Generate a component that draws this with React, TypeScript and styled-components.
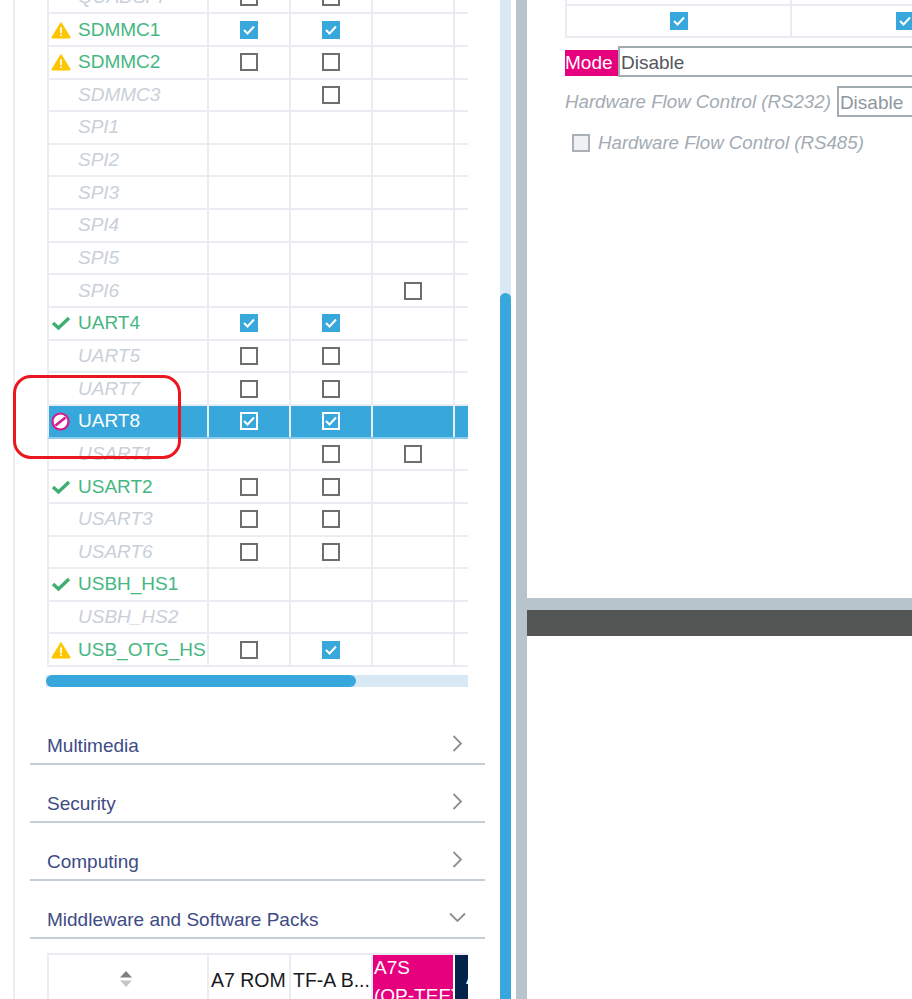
import styled, { createGlobalStyle } from "styled-components";

const GlobalStyle = createGlobalStyle`
  html, body {
    margin: 0;
    padding: 0;
    background: #fff;
    font-family: "Liberation Sans", Arial, sans-serif;
  }
`;

const StyledPage = styled.div`
  position: relative;
  display: flex;
  width: 912px;
  height: 999px;
  overflow: hidden;
  background: #fff;
`;

const StyledSidebar = styled.div`
  flex: 0 0 487px;
  box-sizing: border-box;
  margin-left: 13px;
  padding-left: 15px;
  border-left: 2px solid #eceef3;
  overflow: hidden;
`;

const StyledTableClip = styled.div`
  margin: -18.4px 0 0 17px;
  width: 421px;
  overflow: hidden;
`;

const StyledRow = styled.div<{ $selected?: boolean }>`
  display: grid;
  grid-template-columns: 160px 82px 82px 82px 82px;
  height: 32.65px;
  box-sizing: border-box;
  border-bottom: 2px solid ${({ $selected }) => ($selected ? "#8ccbe9" : "#e9ecf1")};
  border-left: 2px solid #e9ecf1;
  background: ${({ $selected }) => ($selected ? "#38a8dc" : "transparent")};
`;

const StyledNameCell = styled.div`
  display: flex;
  align-items: center;
  padding-left: 2px;
  border-right: 2px solid #e9ecf1;
  overflow: hidden;
`;

const StyledCell = styled.div`
  display: flex;
  align-items: center;
  justify-content: center;
  border-right: 2px solid #e9ecf1;
`;

const StyledIconSlot = styled.span`
  flex: 0 0 27px;
  display: flex;
  align-items: center;
`;

const StyledName = styled.span<{ $status: RowStatus }>`
  font-size: 19px;
  white-space: nowrap;
  font-style: ${({ $status }) => ($status === "off" ? "italic" : "normal")};
  color: ${({ $status }) =>
    $status === "off" ? "#c9d0d8" : $status === "blocked" ? "#fff" : "#45b781"};
`;

const StyledBox = styled.span<{ $checked?: boolean; $selected?: boolean; $disabled?: boolean }>`
  display: inline-flex;
  align-items: center;
  justify-content: center;
  box-sizing: border-box;
  width: 18px;
  height: 18px;
  border: ${({ $checked, $selected, $disabled }) =>
    $selected
      ? "2px solid #fff"
      : $disabled
        ? "2px solid #a9b0b6"
        : $checked
          ? "0"
          : "2px solid #6e6e6e"};
  background: ${({ $checked, $selected, $disabled }) =>
    $selected ? "transparent" : $disabled ? "#eff1f4" : $checked ? "#38a8dc" : "#fff"};
`;

const StyledHScroll = styled.div`
  margin: 8.4px 0 0 16px;
  width: 422px;
  height: 12px;
  background: #d9e8f5;
`;

const StyledHThumb = styled.div`
  width: 310px;
  height: 100%;
  border-radius: 6px;
  background: #38a8dc;
`;

const StyledAccordions = styled.div`
  margin-top: 20px;
  width: 455px;
`;

const StyledAccordion = styled.div`
  display: flex;
  align-items: flex-end;
  justify-content: space-between;
  box-sizing: border-box;
  height: 57.8px;
  padding: 0 22px 6px 17px;
  border-bottom: 2px solid #c5ced6;
  font-size: 19px;
  color: #3e4b85;
`;

const StyledChevron = styled.svg<{ $open?: boolean }>`
  display: block;
  margin-bottom: ${({ $open }) => ($open ? "8px" : "5px")};
  margin-right: ${({ $open }) => ($open ? "-3px" : "0")};
`;

const StyledBottomTable = styled.div`
  margin: 14px 0 0 17px;
  width: 421px;
  height: 60px;
  display: grid;
  grid-template-columns: 160px 82px 82px 82px 13px;
  box-sizing: border-box;
  border-top: 2px solid #e9ecf1;
  border-left: 2px solid #e9ecf1;
  overflow: hidden;
`;

const StyledHeadCell = styled.div`
  display: flex;
  align-items: center;
  padding: 0 0 6px 2px;
  border-right: 2px solid #e9ecf1;
  font-size: 19.5px;
  color: #1a1a22;
  white-space: nowrap;
  overflow: hidden;
`;

const StyledSortCell = styled(StyledHeadCell)`
  justify-content: center;
  padding: 0 4px 10px 0;
`;

const StyledPinkHead = styled.div`
  margin-top: -1px;
  padding: 0 0 0 1px;
  background: #e6007e;
  color: #fff;
  font-size: 19px;
  line-height: 28px;
  white-space: nowrap;
  overflow: hidden;
  border-right: 2px solid #fff;
`;

const StyledNavyHead = styled.div`
  margin-top: -1px;
  padding: 14px 0 0 11px;
  background: #03234b;
  color: #fff;
  font-size: 18px;
  overflow: hidden;
`;

const StyledVScroll = styled.div`
  flex: 0 0 11px;
  display: flex;
  flex-direction: column;
  background: #d9e8f5;
`;

const StyledVThumb = styled.div`
  flex: 1;
  margin-top: 293px;
  border-radius: 6px 6px 0 0;
  background: #38a8dc;
`;

const StyledDivider = styled.div`
  flex: 0 0 11px;
  margin-left: 5px;
  background: #b8c4cb;
`;

const StyledRight = styled.div`
  flex: 1;
  display: flex;
  flex-direction: column;
  min-width: 0;
`;

const StyledConfig = styled.div`
  height: 598px;
  box-sizing: border-box;
  padding-left: 38px;
  overflow: hidden;
`;

const StyledConfigTable = styled.div`
  width: 460px;
  display: grid;
  grid-template-columns: 225px 227px;
  border-left: 2px solid #e9ecf1;
`;

const StyledConfigTop = styled.div`
  height: 4px;
  border-right: 2px solid #e9ecf1;
  border-bottom: 2px solid #e9ecf1;
`;

const StyledConfigCell = styled.div`
  height: 32px;
  box-sizing: border-box;
  display: flex;
  align-items: center;
  justify-content: center;
  border-right: 2px solid #e9ecf1;
  border-bottom: 2px solid #e9ecf1;
`;

const StyledModeRow = styled.div`
  display: flex;
  align-items: center;
  margin-top: 8px;
  width: 500px;
`;

const StyledModeLabel = styled.span`
  display: flex;
  align-items: center;
  box-sizing: border-box;
  width: 53px;
  height: 26px;
  margin-top: 2px;
  background: #e6007e;
  color: #fff;
  font-size: 19px;
`;

const StyledSelect = styled.div<{ $disabled?: boolean }>`
  display: flex;
  align-items: center;
  box-sizing: border-box;
  height: 31px;
  padding: 2px 0 0 1px;
  border: 2px solid #a2abb0;
  font-size: 19px;
  color: ${({ $disabled }) => ($disabled ? "#8f979e" : "#54565c")};
`;

const StyledModeSelect = styled(StyledSelect)`
  flex: 1;
`;

const StyledFlowRow = styled.div`
  display: flex;
  align-items: center;
  margin-top: 9px;
  width: 500px;
`;

const StyledFlowLabel = styled.span`
  font-size: 18.7px;
  font-style: italic;
  white-space: nowrap;
  color: #a3abb3;
  margin-right: 6px;
`;

const StyledFlowSelect = styled(StyledSelect)`
  flex: 1;
`;

const StyledRs485 = styled.div`
  display: flex;
  align-items: center;
  gap: 8px;
  margin: 15px 0 0 7px;
`;

const StyledDarkBar = styled.div`
  height: 26px;
  border-top: 12px solid #b8c4cb;
  background: #545655;
`;

const StyledAnnotation = styled.div`
  position: absolute;
  left: 13px;
  top: 375px;
  width: 168px;
  height: 84px;
  box-sizing: border-box;
  border: 3px solid #ea1620;
  border-radius: 18px;
  pointer-events: none;
`;

type RowStatus = "ok" | "warn" | "off" | "blocked";
type Tick = boolean | null;

interface IRow {
  name: string;
  status: RowStatus;
  ticks: Tick[];
}

const rows: IRow[] = [
  { name: "QUADSPI", status: "off", ticks: [false, false, null] },
  { name: "SDMMC1", status: "warn", ticks: [true, true, null] },
  { name: "SDMMC2", status: "warn", ticks: [false, false, null] },
  { name: "SDMMC3", status: "off", ticks: [null, false, null] },
  { name: "SPI1", status: "off", ticks: [null, null, null] },
  { name: "SPI2", status: "off", ticks: [null, null, null] },
  { name: "SPI3", status: "off", ticks: [null, null, null] },
  { name: "SPI4", status: "off", ticks: [null, null, null] },
  { name: "SPI5", status: "off", ticks: [null, null, null] },
  { name: "SPI6", status: "off", ticks: [null, null, false] },
  { name: "UART4", status: "ok", ticks: [true, true, null] },
  { name: "UART5", status: "off", ticks: [false, false, null] },
  { name: "UART7", status: "off", ticks: [false, false, null] },
  { name: "UART8", status: "blocked", ticks: [true, true, null] },
  { name: "USART1", status: "off", ticks: [null, false, false] },
  { name: "USART2", status: "ok", ticks: [false, false, null] },
  { name: "USART3", status: "off", ticks: [false, false, null] },
  { name: "USART6", status: "off", ticks: [false, false, null] },
  { name: "USBH_HS1", status: "ok", ticks: [null, null, null] },
  { name: "USBH_HS2", status: "off", ticks: [null, null, null] },
  { name: "USB_OTG_HS", status: "warn", ticks: [false, true, null] },
];

const StatusIcon = ({ status }: { status: RowStatus }) => {
  if (status === "warn") {
    return (
      <svg width="20" height="18" viewBox="0 0 21 18">
        <path d="M10.5 1 L20 16.5 Q20.3 17.5 19 17.5 H2 Q0.7 17.5 1 16.5 Z" fill="#fdc600" stroke="#fdc600" strokeLinejoin="round" />
        <rect x="9.6" y="6" width="1.8" height="6.5" fill="#fff" />
        <rect x="9.6" y="13.6" width="1.8" height="1.8" fill="#fff" />
      </svg>
    );
  }
  if (status === "ok") {
    return (
      <svg width="20" height="16" viewBox="0 0 20 16">
        <path d="M2 8 L7.5 13 L18 3" fill="none" stroke="#3fae72" strokeWidth="3.4" />
      </svg>
    );
  }
  if (status === "blocked") {
    return (
      <svg width="19" height="19" viewBox="0 0 19 19">
        <circle cx="9.5" cy="9.5" r="8" fill="#fff" stroke="#d6188f" strokeWidth="2.2" />
        <path d="M4.5 13.5 L14.5 5.5" stroke="#d6188f" strokeWidth="2.6" />
      </svg>
    );
  }
  return null;
};

const CheckMark = () => (
  <svg width="12" height="10" viewBox="0 0 12 10">
    <path d="M1 5 L4.5 8.5 L11 1.5" fill="none" stroke="#fff" strokeWidth="2" />
  </svg>
);

const Chevron = ({ open }: { open?: boolean }) =>
  open ? (
    <StyledChevron $open width="17" height="11" viewBox="0 0 17 11">
      <path d="M1 1.5 L8.5 9 L16 1.5" fill="none" stroke="#8b8f94" strokeWidth="1.8" />
    </StyledChevron>
  ) : (
    <StyledChevron width="11" height="17" viewBox="0 0 11 17">
      <path d="M1.5 1 L9 8.5 L1.5 16" fill="none" stroke="#8b8f94" strokeWidth="1.8" />
    </StyledChevron>
  );

const SortIcon = () => (
  <svg width="14" height="16" viewBox="0 0 14 16">
    <path d="M7 0 L13 6.5 H1 Z" fill="#7d8184" />
    <path d="M7 16 L13 9.5 H1 Z" fill="#c4c7c9" />
  </svg>
);

export default function App() {
  return (
    <StyledPage>
      <GlobalStyle />
      <StyledSidebar>
        <StyledTableClip>
          {rows.map((row) => (
            <StyledRow key={row.name} $selected={row.status === "blocked"}>
              <StyledNameCell>
                <StyledIconSlot>
                  <StatusIcon status={row.status} />
                </StyledIconSlot>
                <StyledName $status={row.status}>{row.name}</StyledName>
              </StyledNameCell>
              {row.ticks.map((tick, i) => (
                <StyledCell key={i}>
                  {tick !== null && (
                    <StyledBox $checked={tick} $selected={row.status === "blocked"}>
                      {tick && <CheckMark />}
                    </StyledBox>
                  )}
                </StyledCell>
              ))}
              <StyledCell />
            </StyledRow>
          ))}
        </StyledTableClip>
        <StyledHScroll>
          <StyledHThumb />
        </StyledHScroll>
        <StyledAccordions>
          <StyledAccordion>
            Multimedia
            <Chevron />
          </StyledAccordion>
          <StyledAccordion>
            Security
            <Chevron />
          </StyledAccordion>
          <StyledAccordion>
            Computing
            <Chevron />
          </StyledAccordion>
          <StyledAccordion>
            Middleware and Software Packs
            <Chevron open />
          </StyledAccordion>
        </StyledAccordions>
        <StyledBottomTable>
          <StyledSortCell>
            <SortIcon />
          </StyledSortCell>
          <StyledHeadCell>A7 ROM</StyledHeadCell>
          <StyledHeadCell>TF-A B...</StyledHeadCell>
          <StyledPinkHead>
            A7S
            <br />
            (OP-TEE)
          </StyledPinkHead>
          <StyledNavyHead>A</StyledNavyHead>
        </StyledBottomTable>
      </StyledSidebar>
      <StyledVScroll>
        <StyledVThumb />
      </StyledVScroll>
      <StyledDivider />
      <StyledRight>
        <StyledConfig>
          <StyledConfigTable>
            <StyledConfigTop />
            <StyledConfigTop />
            <StyledConfigCell>
              <StyledBox $checked>
                <CheckMark />
              </StyledBox>
            </StyledConfigCell>
            <StyledConfigCell>
              <StyledBox $checked>
                <CheckMark />
              </StyledBox>
            </StyledConfigCell>
          </StyledConfigTable>
          <StyledModeRow>
            <StyledModeLabel>Mode</StyledModeLabel>
            <StyledModeSelect>Disable</StyledModeSelect>
          </StyledModeRow>
          <StyledFlowRow>
            <StyledFlowLabel>Hardware Flow Control (RS232)</StyledFlowLabel>
            <StyledFlowSelect $disabled>Disable</StyledFlowSelect>
          </StyledFlowRow>
          <StyledRs485>
            <StyledBox $disabled />
            <StyledFlowLabel>Hardware Flow Control (RS485)</StyledFlowLabel>
          </StyledRs485>
        </StyledConfig>
        <StyledDarkBar />
      </StyledRight>
      <StyledAnnotation />
    </StyledPage>
  );
}
